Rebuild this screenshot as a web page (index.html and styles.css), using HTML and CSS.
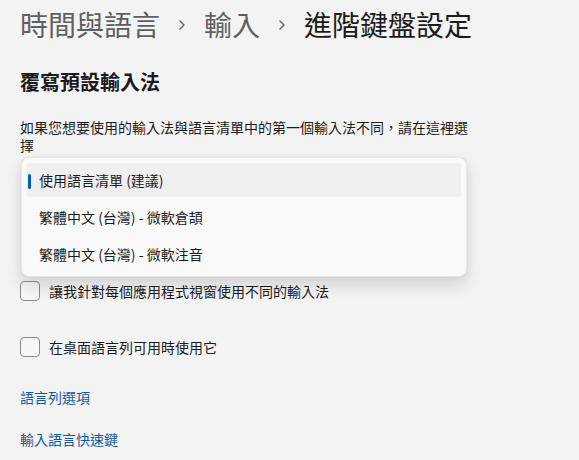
FILE: index.html
```html
<!DOCTYPE html>
<html lang="zh-Hant">
<head>
<meta charset="utf-8">
<title>進階鍵盤設定</title>
<link rel="stylesheet" href="styles.css">
</head>
<body>
<div class="page">
  <div class="breadcrumb">
    <span class="crumb">時間與語言</span>
    <svg class="chev" width="8" height="12" viewBox="0 0 8 12"><path d="M2 2 L6 6 L2 10" fill="none" stroke="#5f5f5f" stroke-width="1.4" stroke-linecap="round" stroke-linejoin="round"/></svg>
    <span class="crumb">輸入</span>
    <svg class="chev" width="8" height="12" viewBox="0 0 8 12"><path d="M2 2 L6 6 L2 10" fill="none" stroke="#5f5f5f" stroke-width="1.4" stroke-linecap="round" stroke-linejoin="round"/></svg>
    <span class="crumb current">進階鍵盤設定</span>
  </div>

  <h2 class="heading">覆寫預設輸入法</h2>
  <p class="desc">如果您想要使用的輸入法與語言清單中的第一個輸入法不同，請在這裡選擇</p>

  <div class="combo-area">
    <div class="popup">
      <div class="item selected"><span class="accent"></span>使用語言清單 (建議)</div>
      <div class="item">繁體中文 (台灣) - 微軟倉頡</div>
      <div class="item">繁體中文 (台灣) - 微軟注音</div>
    </div>
  </div>

  <label class="check">
    <span class="box"></span>
    <span class="check-label">讓我針對每個應用程式視窗使用不同的輸入法</span>
  </label>
  <label class="check second">
    <span class="box"></span>
    <span class="check-label">在桌面語言列可用時使用它</span>
  </label>

  <a class="link first" href="#">語言列選項</a>
  <a class="link" href="#">輸入語言快速鍵</a>
</div>
</body>
</html>
```
FILE: styles.css
```css
html, body {
  margin: 0;
  padding: 0;
  background: #f3f3f3;
}
body {
  font-family: "Noto Sans CJK TC", "Noto Sans", sans-serif;
  color: #1b1b1b;
  font-size: 14px;
}
.page {
  padding: 4px 20px 0 20px;
}
.breadcrumb {
  display: flex;
  align-items: center;
  height: 40px;
  font-size: 28px;
  line-height: 40px;
  color: #5f5f5f;
}
.crumb.current {
  color: #1a1a1a;
}
.chev {
  margin: 2px 18px 0 18px;
}
.heading {
  margin: 24px 0 0 0;
  font-size: 20px;
  line-height: 28px;
  font-weight: 600;
  color: #1a1a1a;
}
.desc {
  margin: 22px 0 0 0;
  width: 452px;
  line-height: 18px;
  font-size: 14px;
  color: #1b1b1b;
}
.combo-area {
  position: relative;
  height: 127px;
}
.popup {
  position: absolute;
  top: 3px;
  left: 1px;
  width: 444px;
  padding: 4px 0 2px 0;
  background: #f9f9f9;
  border: 1px solid #e6e6e6;
  border-radius: 8px;
  box-shadow: 0 8px 16px rgba(0, 0, 0, 0.14), 0 0 2px rgba(0, 0, 0, 0.08);
}
.item {
  position: relative;
  margin: 1px 5px 3px 5px;
  height: 34px;
  line-height: 34px;
  padding-left: 12px;
  border-radius: 4px;
  color: #1b1b1b;
}
.item.selected {
  background: #efefef;
}
.accent {
  position: absolute;
  left: 1px;
  top: 11px;
  width: 3px;
  height: 15px;
  border-radius: 2px;
  background: #005fb8;
}
.check {
  display: flex;
  align-items: center;
  height: 20px;
}
.check.second {
  margin-top: 36px;
}
.box {
  box-sizing: border-box;
  width: 20px;
  height: 20px;
  border: 1px solid #8a8a8a;
  border-radius: 4px;
  background: #f6f6f6;
  margin-right: 9px;
}
.check-label {
  line-height: 20px;
  color: #1b1b1b;
}
.link {
  display: block;
  width: max-content;
  line-height: 20px;
  color: #0e5aa7;
  text-decoration: none;
  margin-top: 22px;
}
.link.first {
  margin-top: 30px;
}
```
